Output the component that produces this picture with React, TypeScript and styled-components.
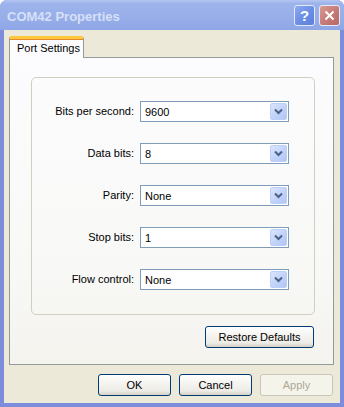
import React from 'react';
import styled, { createGlobalStyle } from 'styled-components';

const Global = createGlobalStyle`
  html, body { margin: 0; padding: 0; background: #fff; }
  body { font-family: "Liberation Sans", Arial, sans-serif; font-size: 11px; }
`;

const Window = styled.div`
  width: 344px;
  height: 407px;
  box-sizing: border-box;
  background: #7d8ddc;
  border-radius: 7px 7px 0 0;
  display: flex;
  flex-direction: column;
  overflow: hidden;
`;

const TitleBar = styled.div`
  height: 30px;
  flex: none;
  display: flex;
  align-items: center;
  padding: 0 4px 0 7px;
  background: linear-gradient(to bottom, #b5c6f2 0%, #9db3eb 12%, #97aee9 60%, #8ea6e6 100%);
`;

const Title = styled.div`
  flex: 1;
  color: #d6e0f7;
  font-family: "Liberation Sans", Arial, sans-serif;
  font-weight: bold;
  font-size: 13px;
  padding-top: 2px;
`;

const CaptionButton = styled.div<{ $red?: boolean }>`
  width: 21px;
  height: 21px;
  box-sizing: border-box;
  margin-left: 4px;
  border: 1px solid #e4eafa;
  border-radius: 3px;
  background: ${p => p.$red
    ? 'linear-gradient(135deg, #d99b95 0%, #c77c78 50%, #b86863 100%)'
    : 'linear-gradient(135deg, #8eaaf0 0%, #6c8fe6 50%, #5b7fdc 100%)'};
  display: flex;
  align-items: center;
  justify-content: center;
  color: #fff;
  font-weight: bold;
  font-size: 15px;
  font-family: "Liberation Sans", Arial, sans-serif;
`;

const Body = styled.div`
  flex: 1;
  margin: 0 4px 4px 4px;
  background: #ece9d8;
  padding: 6px 6px 0 5px;
  display: flex;
  flex-direction: column;
`;

const TabStrip = styled.div`
  display: flex;
  height: 21px;
  position: relative;
  z-index: 1;
`;

const Tab = styled.div`
  width: 75px;
  box-sizing: border-box;
  height: 22px;
  border: 1px solid #919b9c;
  border-bottom: none;
  border-top: 3px solid #ffc83c;
  border-radius: 3px 3px 0 0;
  background: #fcfcfe;
  color: #000;
  padding: 3px 0 0 7px;
  box-shadow: inset 0 1px 0 #e68b2c;
`;

const Panel = styled.div`
  width: 325px;
  height: 308px;
  box-sizing: border-box;
  border: 1px solid #919b9c;
  background: linear-gradient(to bottom, #fcfcfe 0%, #f8f8f6 70%, #f4f3ee 100%);
  padding: 19px 19px 0 21px;
  display: flex;
  flex-direction: column;
`;

const Group = styled.div`
  width: 284px;
  height: 238px;
  box-sizing: border-box;
  border: 1px solid #d0d0bf;
  border-radius: 5px;
  padding-top: 23px;
  display: grid;
  grid-template-columns: 102px 149px;
  column-gap: 6px;
  row-gap: 21px;
  align-content: start;
`;

const Label = styled.div`
  text-align: right;
  line-height: 21px;
  color: #000;
`;

const Combo = styled.div`
  height: 21px;
  box-sizing: border-box;
  border: 1px solid #7f9db9;
  background: #fff;
  display: flex;
  align-items: center;
  padding: 0 1px 0 4px;
`;

const ComboText = styled.div`
  flex: 1;
  color: #000;
`;

const DropButton = styled.div`
  width: 17px;
  height: 17px;
  box-sizing: border-box;
  border: 1px solid #bccff8;
  border-radius: 2px;
  background: linear-gradient(135deg, #dbe6fe 0%, #c3d4fb 50%, #b1c6f5 100%);
  display: flex;
  align-items: center;
  justify-content: center;
`;

const PanelFooter = styled.div`
  display: flex;
  justify-content: flex-end;
  width: 283px;
  margin-top: 11px;
`;

const Button = styled.div<{ $w?: number; $disabled?: boolean }>`
  width: ${p => p.$w ?? 73}px;
  height: 22px;
  box-sizing: border-box;
  border: 1px solid ${p => p.$disabled ? '#c9c7ba' : '#003c74'};
  border-radius: 3px;
  background: ${p => p.$disabled
    ? '#f5f4ea'
    : 'linear-gradient(to bottom, #ffffff 0%, #f5f4f0 40%, #ecebe6 80%, #d6d0c5 100%)'};
  color: ${p => p.$disabled ? '#aca899' : '#000'};
  display: flex;
  align-items: center;
  justify-content: center;
`;

const ButtonRow = styled.div`
  display: flex;
  justify-content: flex-end;
  gap: 8px;
  width: 324px;
  margin-top: 9px;
`;

const Chevron = () => (
  <svg width="9" height="7" viewBox="0 0 9 7">
    <path d="M1 1.5 L4.5 5 L8 1.5" fill="none" stroke="#4d6185" strokeWidth="2" />
  </svg>
);

const fields = [
  { label: 'Bits per second:', value: '9600' },
  { label: 'Data bits:', value: '8' },
  { label: 'Parity:', value: 'None' },
  { label: 'Stop bits:', value: '1' },
  { label: 'Flow control:', value: 'None' },
];

export default function App() {
  return (
    <>
      <Global />
      <Window>
        <TitleBar>
          <Title>COM42 Properties</Title>
          <CaptionButton>?</CaptionButton>
          <CaptionButton $red>
            <svg width="11" height="11" viewBox="0 0 11 11">
              <path d="M1.5 1.5 L9.5 9.5 M9.5 1.5 L1.5 9.5" stroke="#fff" strokeWidth="2" />
            </svg>
          </CaptionButton>
        </TitleBar>
        <Body>
          <TabStrip>
            <Tab>Port Settings</Tab>
          </TabStrip>
          <Panel>
            <Group>
              {fields.map(f => (
                <React.Fragment key={f.label}>
                  <Label>{f.label}</Label>
                  <Combo>
                    <ComboText>{f.value}</ComboText>
                    <DropButton><Chevron /></DropButton>
                  </Combo>
                </React.Fragment>
              ))}
            </Group>
            <PanelFooter>
              <Button $w={109}>Restore Defaults</Button>
            </PanelFooter>
          </Panel>
          <ButtonRow>
            <Button>OK</Button>
            <Button>Cancel</Button>
            <Button $disabled>Apply</Button>
          </ButtonRow>
        </Body>
      </Window>
    </>
  );
}
